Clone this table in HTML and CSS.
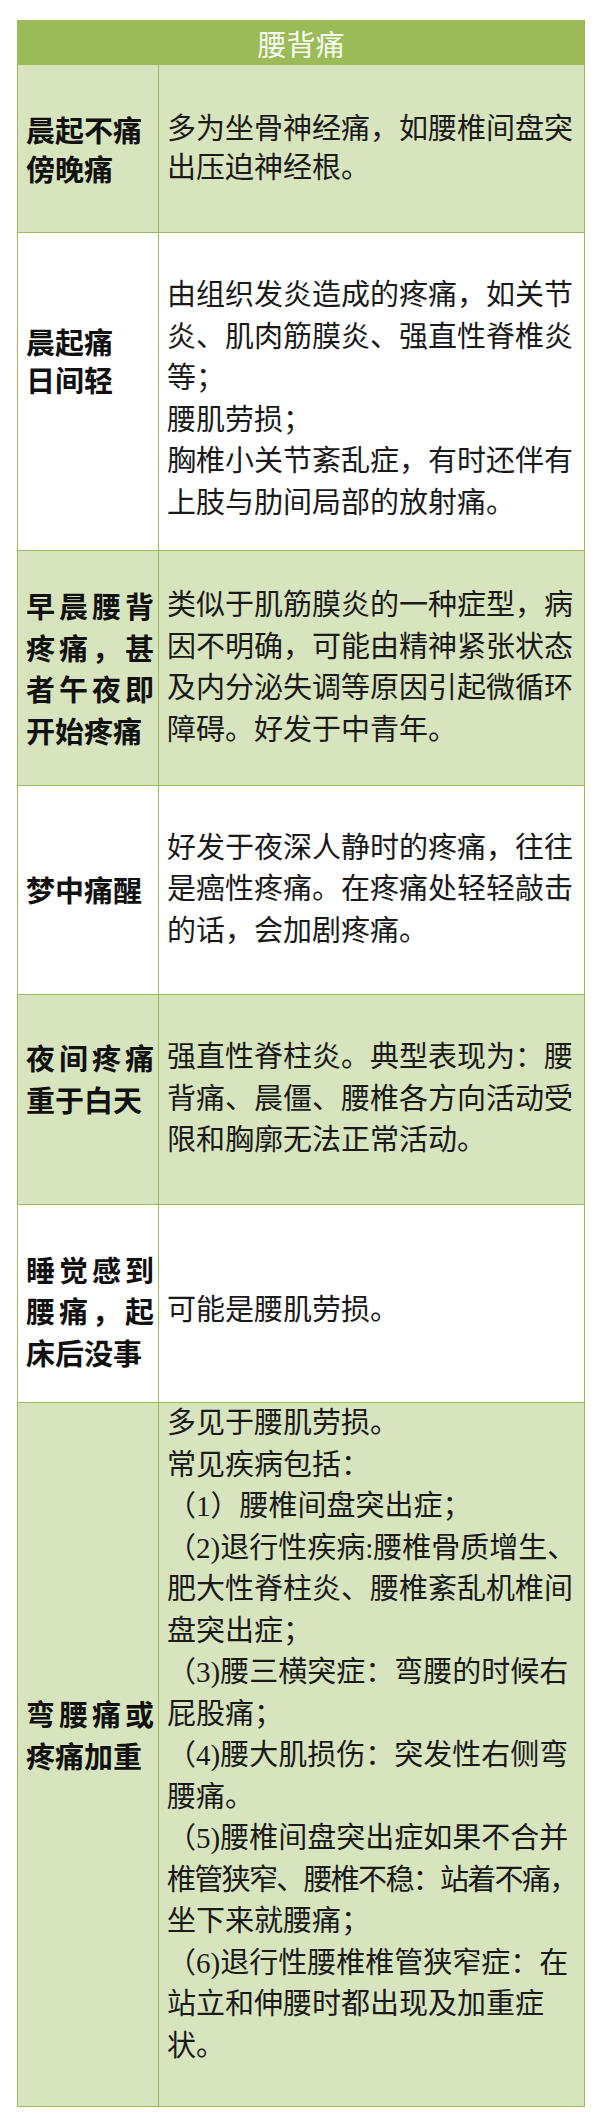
FILE: index.html
```html
<!DOCTYPE html>
<html lang="zh-CN">
<head>
<meta charset="utf-8">
<title>腰背痛</title>
<link rel="stylesheet" href="styles.css">
</head>
<body>
<table class="pain-table">
  <colgroup>
    <col class="col-label">
    <col class="col-desc">
  </colgroup>
  <thead>
    <tr class="row-head"><th colspan="2">腰背痛</th></tr>
  </thead>
  <tbody>
    <tr class="row row-1 shade">
      <td class="label">晨起不痛<br>傍晚痛</td>
      <td class="desc">多为坐骨神经痛，如腰椎间盘突<br>出压迫神经根。</td>
    </tr>
    <tr class="row row-2">
      <td class="label">晨起痛<br>日间轻</td>
      <td class="desc">由组织发炎造成的疼痛，如关节<br>炎、肌肉筋膜炎、强直性脊椎炎<br>等；<br>腰肌劳损；<br>胸椎小关节紊乱症，有时还伴有<br>上肢与肋间局部的放射痛。</td>
    </tr>
    <tr class="row row-3 shade">
      <td class="label">早晨腰背疼痛，甚者午夜即开始疼痛</td>
      <td class="desc">类似于肌筋膜炎的一种症型，病<br>因不明确，可能由精神紧张状态<br>及内分泌失调等原因引起微循环<br>障碍。好发于中青年。</td>
    </tr>
    <tr class="row row-4">
      <td class="label">梦中痛醒</td>
      <td class="desc">好发于夜深人静时的疼痛，往往<br>是癌性疼痛。在疼痛处轻轻敲击<br>的话，会加剧疼痛。</td>
    </tr>
    <tr class="row row-5 shade">
      <td class="label">夜间疼痛重于白天</td>
      <td class="desc">强直性脊柱炎。典型表现为：腰<br>背痛、晨僵、腰椎各方向活动受<br>限和胸廓无法正常活动。</td>
    </tr>
    <tr class="row row-6">
      <td class="label">睡觉感到腰痛，起床后没事</td>
      <td class="desc">可能是腰肌劳损。</td>
    </tr>
    <tr class="row row-7 shade">
      <td class="label">弯腰痛或疼痛加重</td>
      <td class="desc">多见于腰肌劳损。<br>常见疾病包括：<br>（1）腰椎间盘突出症；<br>（2)退行性疾病:腰椎骨质增生、<br>肥大性脊柱炎、腰椎紊乱机椎间<br>盘突出症；<br>（3)腰三横突症：弯腰的时候右<br>屁股痛；<br>（4)腰大肌损伤：突发性右侧弯<br>腰痛。<br>（5)腰椎间盘突出症如果不合并<br><span class="squeeze">椎管狭窄、腰椎不稳：站着不痛，</span><br>坐下来就腰痛；<br>（6)退行性腰椎椎管狭窄症：在<br>站立和伸腰时都出现及加重症<br>状。</td>
    </tr>
  </tbody>
</table>
</body>
</html>
```

FILE: styles.css
```css
html, body {
  margin: 0;
  padding: 0;
  background: #ffffff;
}

body {
  padding: 20px 0 0 17px;
  font-family: "Liberation Serif", "Noto Sans CJK SC", serif;
  color: #141414;
}

.pain-table {
  width: 567px;
  border-collapse: collapse;
  table-layout: fixed;
}

.col-label { width: 141px; }
.col-desc { width: 426px; }

.row-head th {
  height: 43px;
  padding: 0;
  background: #9bbb59;
  border: 1px solid #9bbb59;
  color: #f7faf0;
  font-family: "Noto Sans CJK SC", sans-serif;
  font-weight: normal;
  font-size: 29px;
  line-height: 40px;
  text-align: center;
}

.row td {
  border: 1px solid #9bbb59;
  vertical-align: middle;
  font-size: 29px;
  line-height: 41.5px;
}

.row.shade td { background: #d7e4bd; }

.label {
  padding: 0 4px 0 8px;
  font-family: "Noto Sans CJK SC", sans-serif;
  font-weight: bold;
  text-align: justify;
  color: #111111;
}

.desc {
  padding: 0 4px 0 8px;
  font-weight: normal;
  white-space: nowrap;
  color: #1a1a1a;
}

.squeeze { letter-spacing: -1.7px; }

.row-1 { height: 168px; }
.row-1 td { line-height: 39px; }

.row-2 { height: 318px; }
.row-2 .label { line-height: 38px; vertical-align: top; padding-top: 89px; }
.row-2 .desc { padding-top: 16px; }

.row-3 { height: 235px; }

.row-4 { height: 209px; }

.row-5 { height: 210px; }
.row-5 .label { padding-bottom: 42px; }

.row-6 { height: 198px; }
.row-6 td { padding-top: 15px; }

.row-7 { height: 704px; }
.row-7 .desc { vertical-align: top; padding-top: 0; }
.row-7 .label { padding-bottom: 40px; }
```
